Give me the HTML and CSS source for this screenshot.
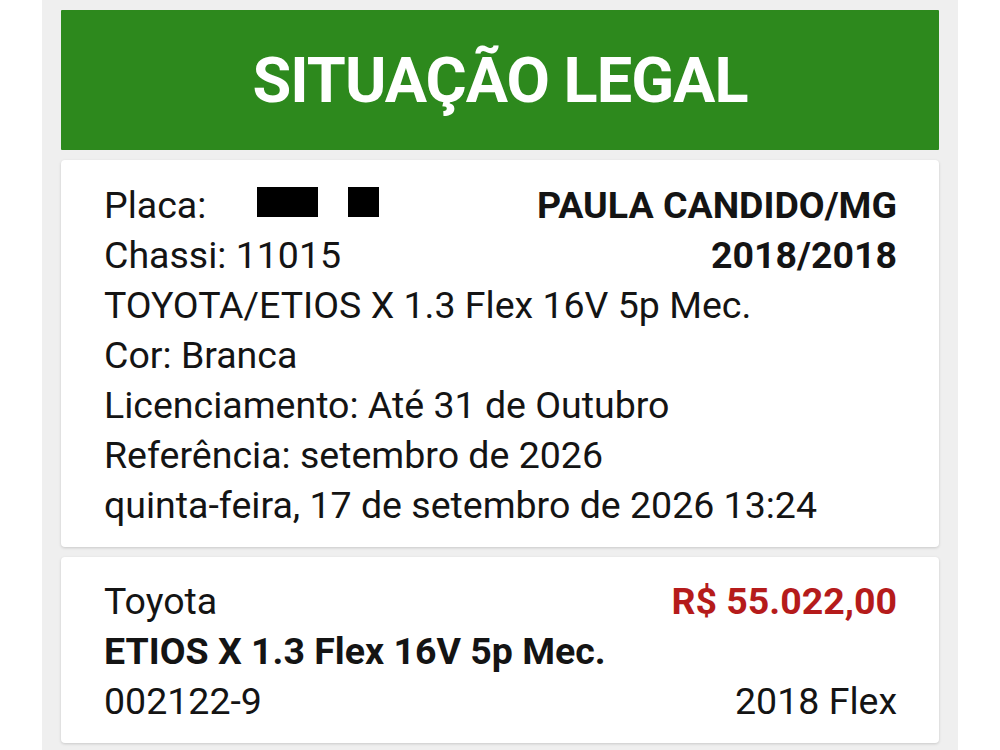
FILE: index.html
```html
<!DOCTYPE html>
<html lang="pt-BR">
<head>
<meta charset="utf-8">
<title>Situação Legal</title>
<link rel="stylesheet" href="styles.css">
</head>
<body>
<div class="page">
  <div class="header">SITUAÇÃO LEGAL</div>
  <div class="card card-info">
    <div class="row">
      <span>Placa:<span class="mask mask-wide"></span><span class="mask mask-narrow"></span></span>
      <span class="bold">PAULA CANDIDO/MG</span>
    </div>
    <div class="row">
      <span>Chassi: 11015</span>
      <span class="bold">2018/2018</span>
    </div>
    <div class="row">TOYOTA/ETIOS X 1.3 Flex 16V 5p Mec.</div>
    <div class="row">Cor: Branca</div>
    <div class="row">Licenciamento: Até 31 de Outubro</div>
    <div class="row">Referência: setembro de 2026</div>
    <div class="row">quinta-feira, 17 de setembro de 2026 13:24</div>
  </div>
  <div class="card card-price">
    <div class="row">
      <span>Toyota</span>
      <span class="bold price">R$ 55.022,00</span>
    </div>
    <div class="row bold">ETIOS X 1.3 Flex 16V 5p Mec.</div>
    <div class="row">
      <span>002122-9</span>
      <span>2018 Flex</span>
    </div>
  </div>
</div>
</body>
</html>
```

FILE: styles.css
```css
html, body {
  margin: 0;
  padding: 0;
  background: #ffffff;
}

body {
  font-family: Roboto, "Liberation Sans", sans-serif;
  color: #141414;
}

.page {
  width: 878px;
  height: 750px;
  margin: 0 auto;
  padding: 10px 19px 0;
  background: #efefef;
  display: flex;
  flex-direction: column;
  gap: 10px;
  box-sizing: content-box;
  overflow: hidden;
}

.header {
  flex: none;
  height: 140px;
  background: #2d891d;
  color: #ffffff;
  font-weight: 700;
  font-size: 63px;
  letter-spacing: -1px;
  display: flex;
  align-items: center;
  justify-content: center;
  border-radius: 1px;
}

.card {
  flex: none;
  background: #ffffff;
  border-radius: 4px;
  box-shadow: 0 1px 3px rgba(0, 0, 0, 0.16);
  padding: 0 42px 0 43px;
  font-size: 37.5px;
  line-height: 50px;
}

.card-info {
  padding-top: 20px;
  padding-bottom: 17px;
}

.card-price {
  padding-top: 19px;
  padding-bottom: 17px;
}

.row {
  display: flex;
  justify-content: space-between;
  white-space: nowrap;
}

.bold {
  font-weight: 700;
}

.price {
  color: #b51b1b;
}

.mask {
  display: inline-block;
  height: 30px;
  background: #000000;
  vertical-align: 1px;
}

.mask-wide {
  width: 61px;
  margin-left: 51px;
}

.mask-narrow {
  width: 31px;
  margin-left: 30px;
}
```
